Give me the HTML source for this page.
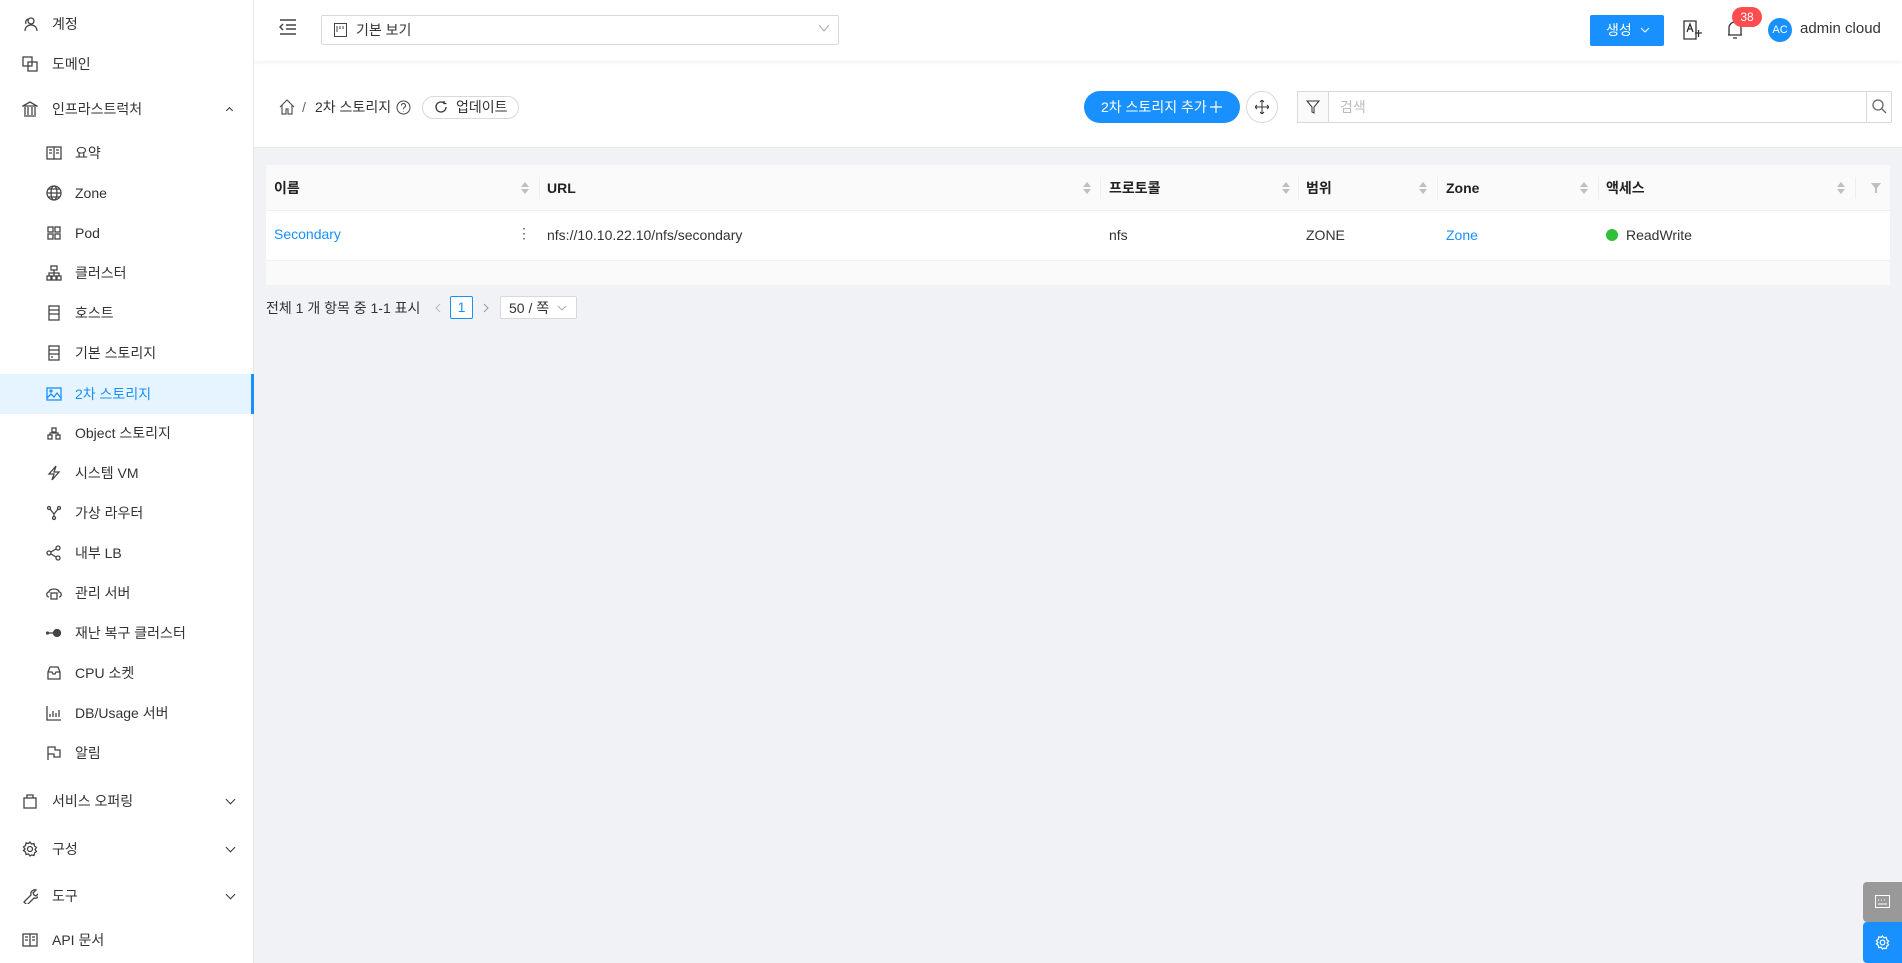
<!DOCTYPE html>
<html><head><meta charset="utf-8"><style>
*{box-sizing:border-box;margin:0;padding:0}
body{width:1902px;height:963px;overflow:hidden;font-family:"Liberation Sans","Noto Sans CJK KR",sans-serif;font-size:14px;line-height:20px;color:#333;background:#f0f2f5;position:relative}
span{line-height:20px}
.sb{position:absolute;left:0;top:0;width:254px;height:963px;background:#fff;border-right:1px solid #e8e8e8;z-index:2}
.it{position:absolute;left:0;width:253px;height:40px;color:#333}
.it svg{position:absolute;top:12px;width:16px;height:16px;fill:none;stroke:#444;stroke-width:1.3}
.it span{position:absolute;top:10px}
.top span{left:52px}
.sub svg{left:46px}.sub span{left:75px}
.act{background:#e6f4ff;color:#1890ff}.act svg{stroke:#1890ff}
.act:after{content:"";position:absolute;right:-1px;top:0;width:3px;height:40px;background:#1890ff}
.chev{position:absolute;left:227px;width:7px;height:7px;border-right:1.5px solid #333;border-bottom:1.5px solid #333;transform:rotate(45deg)}
.hdr{position:absolute;left:254px;top:0;right:0;height:61px;background:#fff;box-shadow:0 1px 4px rgba(0,0,0,.08);z-index:1}
.bar{position:absolute;left:254px;top:61px;right:0;height:87px;background:#fff;border-bottom:1px solid #e8e8e8}
.abs{position:absolute}
.tbl{position:absolute;left:266px;top:165px;width:1624px;height:120px;background:#fff;border-radius:2px}
.th{position:absolute;top:0;height:46px;background:#fafafa;border-bottom:1px solid #f0f0f0;width:1624px}
.th span{position:absolute;top:13px;font-weight:bold;color:#222}
.sep{position:absolute;top:12px;width:1px;height:22px;background:#eee}
.srt{position:absolute;top:17px;width:8px;height:12px}
.td{position:absolute;top:60px}
.blue{color:#1890ff}
</style></head><body>
<div class="sb">
<div class="it top" style="top:4px"><svg style="left:22px" viewBox="0 0 16 16"><circle cx="9" cy="5" r="3"/><path d="M3 15c0-4 3-6 6-6s6 2 6 6M6 3c-2 1-3 3-2 5"/></svg><span>계정</span></div>
<div class="it top" style="top:44px"><svg style="left:22px" viewBox="0 0 16 16"><rect x="1" y="1" width="9" height="9"/><rect x="6" y="6" width="9" height="9"/></svg><span>도메인</span></div>
<div class="it top" style="top:89px"><svg style="left:22px" viewBox="0 0 16 16"><path d="M1 5L8 1l7 4zM2 15h12M3 6v8M6 6v8M10 6v8M13 6v8"/></svg><span>인프라스트럭처</span><i class="chev" style="transform:rotate(225deg);top:19px;width:5px;height:5px"></i></div>
<div class="it sub" style="top:133px"><svg viewBox="0 0 16 16"><rect x="1" y="2" width="14" height="12"/><path d="M8 2v12M3 5h3M3 8h3M10 5h3M10 8h3"/></svg><span>요약</span></div>
<div class="it sub" style="top:173px"><svg viewBox="0 0 16 16"><circle cx="8" cy="8" r="7"/><ellipse cx="8" cy="8" rx="3" ry="7"/><path d="M1 8h14M2 4h12M2 12h12"/></svg><span>Zone</span></div>
<div class="it sub" style="top:213px"><svg viewBox="0 0 16 16"><rect x="2" y="2" width="5" height="5"/><rect x="9" y="2" width="5" height="5"/><rect x="2" y="9" width="5" height="5"/><rect x="9" y="9" width="5" height="5"/></svg><span>Pod</span></div>
<div class="it sub" style="top:253px"><svg viewBox="0 0 16 16"><rect x="5" y="1" width="6" height="4"/><rect x="1" y="11" width="4" height="4"/><rect x="6" y="11" width="4" height="4"/><rect x="11" y="11" width="4" height="4"/><path d="M8 5v6M3 11V8h10v3"/></svg><span>클러스터</span></div>
<div class="it sub" style="top:293px"><svg viewBox="0 0 16 16"><rect x="3" y="1" width="10" height="14"/><path d="M3 5h10M3 9h10"/></svg><span>호스트</span></div>
<div class="it sub" style="top:333px"><svg viewBox="0 0 16 16"><rect x="3" y="1" width="10" height="14"/><path d="M3 5h10M3 9h10M5 12h2"/></svg><span>기본 스토리지</span></div>
<div class="it sub act" style="top:374px"><svg viewBox="0 0 16 16"><rect x="1" y="2" width="14" height="12"/><path d="M1 12l4-4 3 3 3-4 4 5"/><circle cx="5" cy="5" r="1"/></svg><span>2차 스토리지</span></div>
<div class="it sub" style="top:413px"><svg viewBox="0 0 16 16"><rect x="6" y="3" width="4" height="4"/><rect x="2" y="10" width="4" height="4"/><rect x="10" y="10" width="4" height="4"/><path d="M4 10V8h8v2"/></svg><span>Object 스토리지</span></div>
<div class="it sub" style="top:453px"><svg viewBox="0 0 16 16"><path d="M10 1L3 9h5l-2 6 7-8H8z"/></svg><span>시스템 VM</span></div>
<div class="it sub" style="top:493px"><svg viewBox="0 0 16 16"><circle cx="3" cy="3" r="1.5"/><circle cx="13" cy="3" r="1.5"/><circle cx="8" cy="13" r="1.5"/><path d="M4 4l4 5 4-5M8 9v3"/></svg><span>가상 라우터</span></div>
<div class="it sub" style="top:533px"><svg viewBox="0 0 16 16"><circle cx="3" cy="8" r="2"/><circle cx="12" cy="3" r="2"/><circle cx="12" cy="13" r="2"/><path d="M5 7l5-3M5 9l5 3"/></svg><span>내부 LB</span></div>
<div class="it sub" style="top:573px"><svg viewBox="0 0 16 16"><path d="M3 12C0 12 0 7 3 7c0-4 10-4 10 0 3 0 3 5 0 5"/><rect x="5" y="8" width="6" height="6"/></svg><span>관리 서버</span></div>
<div class="it sub" style="top:613px"><svg viewBox="0 0 16 16"><path d="M1 8h7"/><circle cx="1.5" cy="8" r="1" fill="#444"/><circle cx="11" cy="8" r="3.5" fill="#444"/></svg><span>재난 복구 클러스터</span></div>
<div class="it sub" style="top:653px"><svg viewBox="0 0 16 16"><path d="M2 7l2-5h8l2 5v7H2zM2 7h4l1 2h2l1-2h4"/></svg><span>CPU 소켓</span></div>
<div class="it sub" style="top:693px"><svg viewBox="0 0 16 16"><path d="M1 1v14h14M4 12V9M7 12V6M10 12V8M13 12V5"/></svg><span>DB/Usage 서버</span></div>
<div class="it sub" style="top:733px"><svg viewBox="0 0 16 16"><path d="M2 15V2h7v3h5v7H8V9H2"/></svg><span>알림</span></div>
<div class="it top" style="top:781px"><svg style="left:22px" viewBox="0 0 16 16"><rect x="2" y="5" width="12" height="10"/><path d="M5 5V2h6v3"/></svg><span>서비스 오퍼링</span><i class="chev" style="top:15px"></i></div>
<div class="it top" style="top:829px"><svg style="left:22px" viewBox="0 0 16 16"><circle cx="8" cy="8" r="2.5"/><path d="M8 1l1.5 2 2.5-.5.5 2.5 2 1.5-1.5 2 1.5 2-2 1.5-.5 2.5-2.5-.5L8 15l-1.5-2-2.5.5-.5-2.5-2-1.5L3 8 1.5 6l2-1.5.5-2.5 2.5.5z"/></svg><span>구성</span><i class="chev" style="top:15px"></i></div>
<div class="it top" style="top:876px"><svg style="left:22px" viewBox="0 0 16 16"><path d="M2 14l7-7c-1-3 2-6 5-5l-3 3 1 2 2 1 3-3c1 3-2 6-5 5l-7 7z"/></svg><span>도구</span><i class="chev" style="top:15px"></i></div>
<div class="it top" style="top:920px"><svg style="left:22px" viewBox="0 0 16 16"><rect x="1" y="2" width="14" height="12"/><path d="M8 2v12M3 5h3M3 8h3M10 5h3M10 8h3"/></svg><span>API 문서</span></div>
</div>

<div class="hdr"></div>
<svg class="abs" style="left:279px;top:19px;z-index:3" width="18" height="16" viewBox="0 0 18 16" fill="none" stroke="#444" stroke-width="1.5"><path d="M1 1h16M7 6h10M7 10h10M1 15h16M4 5L1 8l3 3"/></svg>
<div class="abs" style="left:321px;top:15px;width:518px;height:30px;border:1px solid #d9d9d9;border-radius:2px;background:#fff;z-index:3"></div>
<div style="position:absolute;left:0;top:0;z-index:4">
<svg class="abs" style="left:334px;top:23px" width="13" height="14" viewBox="0 0 13 14" fill="none" stroke="#444"><rect x=".5" y=".5" width="12" height="13"/><path d="M3 3v6M6 3v3M9 3v3"/></svg>
<span class="abs" style="left:356px;top:20px;white-space:nowrap">기본 보기</span>
<svg class="abs" style="left:818px;top:24px" width="12" height="8" viewBox="0 0 12 8" fill="none" stroke="#aaa"><path d="M1 1l5 6 5-6"/></svg>
<div class="abs" style="left:1590px;top:15px;width:74px;height:31px;background:#1890ff;border-radius:2px;color:#fff"><span class="abs" style="left:16px;top:5px;white-space:nowrap">생성</span><svg class="abs" style="left:50px;top:12px" width="10" height="7" viewBox="0 0 10 7" fill="none" stroke="#fff"><path d="M1 1l4 4 4-4"/></svg></div>
<svg class="abs" style="left:1683px;top:20px" width="20" height="20" viewBox="0 0 20 20" fill="none" stroke="#333" stroke-width="1.3"><path d="M1 1h12v18H1z"/><path d="M4 12l3-8 3 8M5 9h4"/><path d="M12 13h7M15.5 10v7"/></svg>
<svg class="abs" style="left:1727px;top:20px" width="16" height="20" viewBox="0 0 16 20" fill="none" stroke="#333" stroke-width="1.3"><path d="M2 15V8a6 6 0 0112 0v7zM1 15h14M6 18h4"/></svg>
<div class="abs" style="left:1732px;top:7px;width:30px;height:20px;border-radius:10px;background:#ff4d4f;color:#fff;font-size:12px;text-align:center;line-height:20px">38</div>
<div class="abs" style="left:1768px;top:18px;width:24px;height:24px;border-radius:12px;background:#1890ff;color:#fff;font-size:11px;text-align:center;line-height:24px">AC</div>
<span class="abs" style="left:1800px;top:19px;font-size:15px;white-space:nowrap">admin cloud</span>
</div>

<div class="bar"></div>
<svg class="abs" style="left:279px;top:99px" width="16" height="16" viewBox="0 0 16 16" fill="none" stroke="#555" stroke-width="1.2"><path d="M1 8l7-7 7 7M3 6v9h4v-5h2v5h4V6"/></svg>
<span class="abs" style="left:302px;top:97px;color:#666">/</span>
<span class="abs" style="left:315px;top:97px">2차 스토리지</span>
<svg class="abs" style="left:396px;top:100px" width="15" height="15" viewBox="0 0 15 15" fill="none" stroke="#444"><circle cx="7.5" cy="7.5" r="6.5"/><path d="M5.5 5.5a2 2 0 113 1.7c-1 .5-1 1-1 2M7.5 11v.5"/></svg>
<div class="abs" style="left:422px;top:96px;width:97px;height:23px;border:1px solid #d9d9d9;border-radius:12px;background:#fff"></div>
<svg class="abs" style="left:434px;top:100px" width="14" height="14" viewBox="0 0 14 14" fill="none" stroke="#333" stroke-width="1.3"><path d="M12 7a5 5 0 11-2-4M10 1v2.5h2.5"/></svg>
<span class="abs" style="left:456px;top:97px">업데이트</span>
<div class="abs" style="left:1084px;top:91px;width:156px;height:32px;background:#1890ff;border-radius:16px;color:#fff"><span class="abs" style="left:17px;top:6px;white-space:nowrap">2차 스토리지 추가</span><svg class="abs" style="left:126px;top:10px" width="12" height="12" viewBox="0 0 13 13" stroke="#fff" stroke-width="1.3"><path d="M6.5 0v13M0 6.5h13"/></svg></div>
<div class="abs" style="left:1246px;top:91px;width:32px;height:32px;border:1px solid #d9d9d9;border-radius:16px;background:#fff"></div>
<svg class="abs" style="left:1255px;top:100px" width="14" height="14" viewBox="0 0 14 14" fill="none" stroke="#333"><path d="M7 0v14M0 7h14M5 2l2-2 2 2M5 12l2 2 2-2M2 5L0 7l2 2M12 5l2 2-2 2"/></svg>
<div class="abs" style="left:1297px;top:91px;width:595px;height:32px;border:1px solid #d9d9d9;border-radius:2px;background:#fff"></div>
<div class="abs" style="left:1297px;top:91px;width:32px;height:32px;border:1px solid #d9d9d9;background:#fafafa"></div>
<svg class="abs" style="left:1306px;top:100px" width="14" height="14" viewBox="0 0 14 14" fill="none" stroke="#333"><path d="M1 1h12L8 7v6l-2-1V7z"/></svg>
<span class="abs" style="left:1340px;top:97px;color:#bbb">검색</span>
<div class="abs" style="left:1866px;top:91px;width:1px;height:32px;background:#d9d9d9"></div>
<svg class="abs" style="left:1872px;top:99px" width="15" height="15" viewBox="0 0 15 15" fill="none" stroke="#666" stroke-width="1.3"><circle cx="6" cy="6" r="5"/><path d="M10 10l4 4"/></svg>

<div class="tbl">
<div class="th">
<span style="left:8px">이름</span><span style="left:281px">URL</span><span style="left:843px">프로토콜</span><span style="left:1040px">범위</span><span style="left:1180px">Zone</span><span style="left:1340px">액세스</span>
<div class="sep" style="left:273px"></div><div class="sep" style="left:834px"></div><div class="sep" style="left:1032px"></div><div class="sep" style="left:1171px"></div><div class="sep" style="left:1332px"></div><div class="sep" style="left:1589px"></div>
<svg class="srt" style="left:255px" viewBox="0 0 8 12" fill="#bfbfbf"><path d="M4 0l4 5H0zM4 12L0 7h8z"/></svg>
<svg class="srt" style="left:817px" viewBox="0 0 8 12" fill="#bfbfbf"><path d="M4 0l4 5H0zM4 12L0 7h8z"/></svg>
<svg class="srt" style="left:1016px" viewBox="0 0 8 12" fill="#bfbfbf"><path d="M4 0l4 5H0zM4 12L0 7h8z"/></svg>
<svg class="srt" style="left:1153px" viewBox="0 0 8 12" fill="#bfbfbf"><path d="M4 0l4 5H0zM4 12L0 7h8z"/></svg>
<svg class="srt" style="left:1314px" viewBox="0 0 8 12" fill="#bfbfbf"><path d="M4 0l4 5H0zM4 12L0 7h8z"/></svg>
<svg class="srt" style="left:1571px" viewBox="0 0 8 12" fill="#bfbfbf"><path d="M4 0l4 5H0zM4 12L0 7h8z"/></svg>
<svg class="abs" style="left:1605px;top:18px" width="10" height="10" viewBox="0 0 10 10" fill="#bfbfbf"><path d="M0 0h10L6 5v5H4V5z"/></svg>
</div>
<div class="abs" style="top:95px;left:0;width:1624px;height:25px;background:#fafafa;border-top:1px solid #f0f0f0"></div>
<span class="td blue" style="left:8px;top:59px">Secondary</span>
<span class="td" style="left:251px;top:58px;color:#555">⋮</span>
<span class="td" style="left:281px">nfs://10.10.22.10/nfs/secondary</span>
<span class="td" style="left:843px">nfs</span>
<span class="td" style="left:1040px">ZONE</span>
<span class="td blue" style="left:1180px">Zone</span>
<div class="abs" style="left:1340px;top:64px;width:12px;height:12px;border-radius:6px;background:#2fbf3a"></div>
<span class="td" style="left:1360px">ReadWrite</span>
</div>

<span class="abs" style="left:266px;top:298px">전체 1 개 항목 중 1-1 표시</span>
<svg class="abs" style="left:434px;top:303px" width="8" height="10" viewBox="0 0 8 10" fill="none" stroke="#bbb"><path d="M6 1L2 5l4 4"/></svg>
<div class="abs" style="left:450px;top:296px;width:23px;height:23px;border:1px solid #1890ff;border-radius:2px;background:#fff;color:#1890ff;text-align:center;line-height:21px">1</div>
<svg class="abs" style="left:482px;top:303px" width="8" height="10" viewBox="0 0 8 10" fill="none" stroke="#999"><path d="M2 1l4 4-4 4"/></svg>
<div class="abs" style="left:500px;top:296px;width:77px;height:23px;border:1px solid #d9d9d9;border-radius:2px;background:#fff"><span class="abs" style="left:8px;top:1px;white-space:nowrap">50 / 쪽</span><svg class="abs" style="left:56px;top:8px" width="10" height="7" viewBox="0 0 10 7" fill="none" stroke="#aaa"><path d="M1 1l4 4 4-4"/></svg></div>

<div class="abs" style="left:1863px;top:882px;width:39px;height:40px;background:#999;border-radius:4px 0 0 4px"></div>
<svg class="abs" style="left:1875px;top:895px" width="15" height="13" viewBox="0 0 15 13" fill="none" stroke="#fff"><rect x=".5" y=".5" width="14" height="12"/><path d="M3 5h1M6 5h1M9 5h1M3 9h9"/></svg>
<div class="abs" style="left:1863px;top:922px;width:39px;height:41px;background:#1890ff;border-radius:4px 0 0 4px"></div>
<svg class="abs" style="left:1875px;top:935px" width="15" height="15" viewBox="0 0 16 16" fill="none" stroke="#fff" stroke-width="1.3"><circle cx="8" cy="8" r="2.5"/><path d="M8 1l1.5 2 2.5-.5.5 2.5 2 1.5-1.5 2 1.5 2-2 1.5-.5 2.5-2.5-.5L8 15l-1.5-2-2.5.5-.5-2.5-2-1.5L3 8 1.5 6l2-1.5.5-2.5 2.5.5z"/></svg>
</body></html>
